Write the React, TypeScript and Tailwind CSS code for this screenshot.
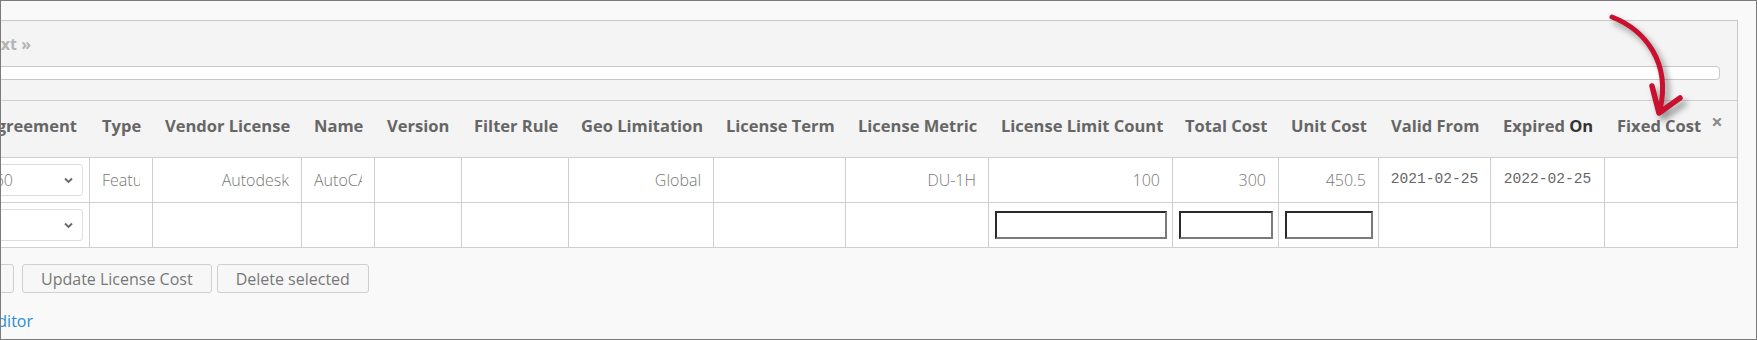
import React from "react";

// column widths, left column is partly off screen
const headers: React.ReactNode[] = [
  "Agreement",
  "Type",
  "Vendor License",
  "Name",
  "Version",
  "Filter Rule",
  "Geo Limitation",
  "License Term",
  "License Metric",
  "License Limit Count",
  "Total Cost",
  "Unit Cost",
  "Valid From",
  "Expired On",
  "Fixed Cost",
];

function Chevron() {
  return (
    <svg width="9" height="7" viewBox="0 0 9 7" className="shrink-0">
      <polyline points="1,1.5 4.5,5 8,1.5" fill="none" stroke="#666" strokeWidth="1.8" />
    </svg>
  );
}

function FakeSelect({ value }: { value?: string }) {
  return (
    <div className="ml-[7px] mr-[6px] flex h-[32px] items-center rounded-[3px] border border-[#dedede] bg-white pr-[9px]">
      <span className="flex-1 overflow-hidden whitespace-nowrap pr-[51px] text-right">{value}</span>
      <Chevron />
    </div>
  );
}

function TextInput() {
  return (
    <div className="ml-[6px] mr-[5px] h-[28px] flex-1 border-2 border-t-[#2a2a2a] border-l-[#2a2a2a] border-r-[#7a7a7a] border-b-[#7a7a7a] bg-white" />
  );
}

function Cell({ children, className = "", last = false }: { children?: React.ReactNode; className?: string; last?: boolean }) {
  return (
    <div
      className={`flex h-[45px] items-center overflow-hidden border-b border-[#cfcfcf] bg-white ${last ? "" : "border-r"} ${className}`}
    >
      {children}
    </div>
  );
}

function Clip({ children, right = false }: { children: React.ReactNode; right?: boolean }) {
  return (
    <div className="w-full px-[12px]">
      <span className={`block overflow-hidden whitespace-nowrap ${right ? "text-right" : ""}`}>{children}</span>
    </div>
  );
}

export default function App() {
  return (
    <div
      className="relative h-[340px] w-[1757px] overflow-hidden border border-[#7b7b7b] bg-[#f9f9f9] text-[#777]"
      style={{ fontFamily: '"Open Sans", "Liberation Sans", sans-serif' }}
    >
      <div className="ml-[-121px] pt-[19px]">
        {/* grid panel */}
        <div className="w-[1858px] border-t border-r border-[#c8c8c8] bg-[#f4f4f4]">
          <div className="flex h-[45px] items-center">
            <span className="w-[151px] text-right text-[16px] font-bold text-[#b4b4b4]">Next »</span>
          </div>
          <div className="mr-[17px] h-[14px] rounded-[4px] border border-[#c8c8c8] bg-white" />
          <div className="h-[20px]" />

          <div className="grid grid-cols-[210px_63px_149px_73px_87px_107px_145px_132px_143px_184px_106px_100px_112px_114px_132px] border-t border-[#cfcfcf]">
            {headers.map((h, i) => (
              <div
                key={i}
                className={`flex h-[57px] items-center whitespace-nowrap border-b border-[#cfcfcf] pb-[6px] text-[16.5px] font-bold text-[#666] ${
                  i === 0 ? "justify-end pr-[13px]" : "pl-[12px]"
                }`}
              >
                {i === 13 ? (
                  <>
                    Expired&nbsp;<span className="text-[#333]">On</span>
                  </>
                ) : i === 14 ? (
                  <>
                    {h}
                    <span className="ml-[10px] -mt-[9px] text-[20px] font-bold leading-none text-[#8a8a8a]">×</span>
                  </>
                ) : (
                  h
                )}
              </div>
            ))}

            {/* row 1 */}
            <Cell className="text-[16px] font-light">
              <div className="flex-1">
                <FakeSelect value="AutoCAD 360" />
              </div>
            </Cell>
            <Cell className="text-[16px] font-light"><Clip>Feature</Clip></Cell>
            <Cell className="text-[16px] font-light"><Clip right>Autodesk</Clip></Cell>
            <Cell className="text-[16px] font-light"><Clip>AutoCAD</Clip></Cell>
            <Cell />
            <Cell />
            <Cell className="text-[16px] font-light"><Clip right>Global</Clip></Cell>
            <Cell />
            <Cell className="text-[16px] font-light"><Clip right>DU-1H</Clip></Cell>
            <Cell className="text-[16px] font-light"><Clip right>100</Clip></Cell>
            <Cell className="text-[16px] font-light"><Clip right>300</Clip></Cell>
            <Cell className="text-[16px] font-light"><Clip right>450.5</Clip></Cell>
            <Cell className="justify-center text-[14.6px] text-[#666]">
              <span style={{ fontFamily: '"Liberation Mono", monospace' }}>2021-02-25</span>
            </Cell>
            <Cell className="justify-center text-[14.6px] text-[#666]">
              <span style={{ fontFamily: '"Liberation Mono", monospace' }}>2022-02-25</span>
            </Cell>
            <Cell last />

            {/* row 2 */}
            <Cell>
              <div className="flex-1">
                <FakeSelect />
              </div>
            </Cell>
            <Cell />
            <Cell />
            <Cell />
            <Cell />
            <Cell />
            <Cell />
            <Cell />
            <Cell />
            <Cell><TextInput /></Cell>
            <Cell><TextInput /></Cell>
            <Cell><TextInput /></Cell>
            <Cell />
            <Cell />
            <Cell last />
          </div>
        </div>

        {/* actions */}
        <div className="mt-[16px] flex h-[29px] text-[16px] text-[#777]">
          <button className="w-[134px] rounded-[3px] border border-[#cfcfcf] bg-[#f7f7f7]">Save changes</button>
          <button className="ml-[8px] rounded-[3px] border border-[#cfcfcf] bg-[#f7f7f7] px-[18px]">Update License Cost</button>
          <button className="ml-[5px] rounded-[3px] border border-[#cfcfcf] bg-[#f7f7f7] px-[18px]">Delete selected</button>
        </div>
        <div className="mt-[17px] flex">
          <a className="w-[153px] text-right text-[16px] leading-[22px] text-[#2a8ed6]" href="#">
            Open in editor
          </a>
        </div>
      </div>

      {/* annotation arrow */}
      <svg
        className="pointer-events-none absolute left-[1599px] top-[9px] drop-shadow-[4px_5px_3px_rgba(0,0,0,0.4)]"
        width="100"
        height="120"
        viewBox="1600 10 100 120"
      >
        <path d="M1612 17 C1645 30 1671 62 1660 110" fill="none" stroke="#c9102e" strokeWidth="5" strokeLinecap="round" />
        <polyline
          points="1652,86 1659,113 1680,98"
          fill="none"
          stroke="#c9102e"
          strokeWidth="5.5"
          strokeLinecap="round"
          strokeLinejoin="round"
        />
      </svg>
    </div>
  );
}
